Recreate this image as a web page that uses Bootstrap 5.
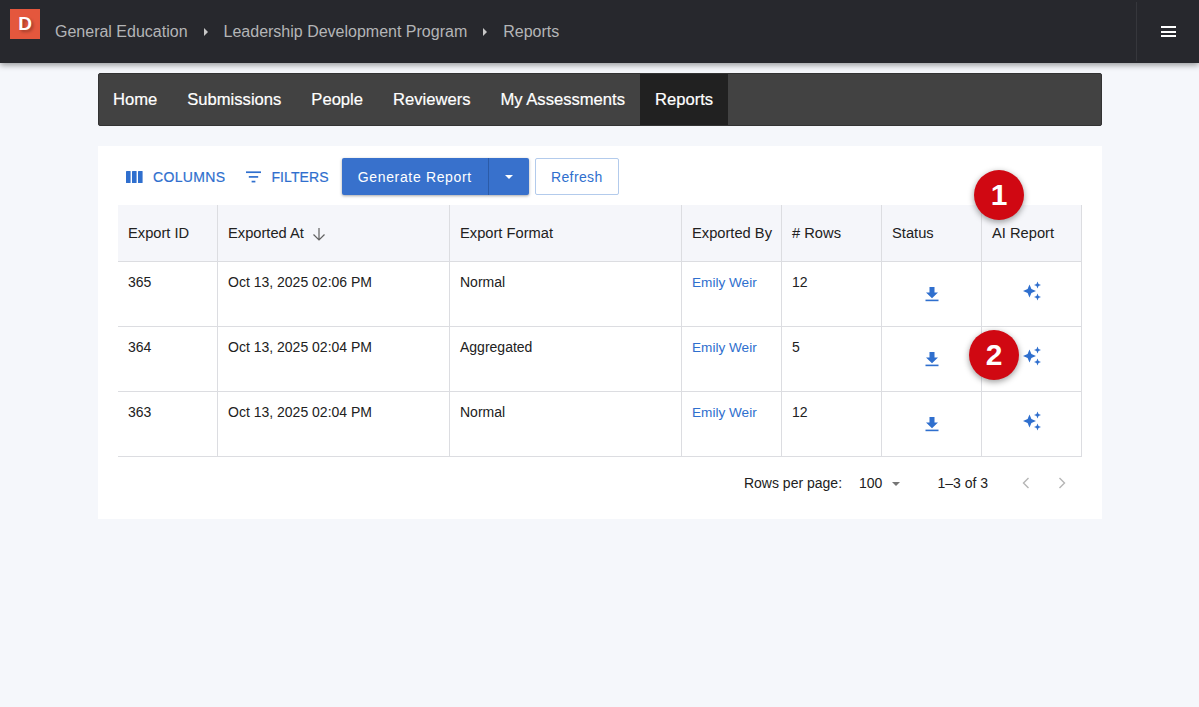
<!DOCTYPE html>
<html lang="en">
<head>
  <meta charset="UTF-8" />
  <title>Reports</title>
  <meta name="viewport" content="width=device-width, initial-scale=1" />
  <link href="https://cdn.jsdelivr.net/npm/bootstrap@5.3.3/dist/css/bootstrap.min.css" rel="stylesheet" />
  <style>
    body {
      margin: 0;
      height: 707px;
      overflow: hidden;
      position: relative;
      font-family: "Liberation Sans", Arial, sans-serif;
      background-color: #f5f7fb;
      color: #212121;
    }

    /* Top bar */
    .top-bar {
      height: 63px;
      background-color: #27282d;
      box-shadow: 0 2px 6px rgba(0, 0, 0, .4);
    }
    .logo-box {
      width: 30px;
      height: 30px;
      margin: 9px 0 0 10px;
      background-color: #e4573d;
      color: #fff;
      font-weight: 700;
      font-size: 19px;
      line-height: 30px;
      text-align: center;
      text-shadow: 2px 2px 3px rgba(0, 0, 0, .3);
    }
    .crumbs {
      margin-left: 15px;
      font-size: 16px;
      color: #b4b5b7;
      gap: 15px;
    }
    .crumb-sep {
      width: 0;
      height: 0;
      margin: 0 1px;
      border-left: 4px solid #c8c8c8;
      border-top: 4px solid transparent;
      border-bottom: 4px solid transparent;
    }
    .menu-btn {
      width: 63px;
      height: 59px;
      margin-top: 2px;
      border-left: 1px solid #36373c;
    }
    .menu-lines {
      width: 15px;
      height: 11px;
      border-top: 2px solid #fff;
      border-bottom: 2px solid #fff;
      position: relative;
    }
    .menu-lines::after {
      content: "";
      position: absolute;
      left: 0;
      right: 0;
      top: 2.5px;
      height: 2px;
      background: #fff;
    }

    /* Section tabs */
    .page-wrap {
      width: 1004px;
      margin: 10px 0 0 98px;
    }
    .tab-bar {
      height: 53px;
      background-color: #424242;
      border: 1px solid #333;
      border-radius: 2px;
    }
    .tab-link {
      display: block;
      padding: 0 15px;
      line-height: 51px;
      font-size: 16.6px;
      color: #fff;
      text-decoration: none;
      -webkit-text-stroke: .2px #fff;
    }
    .tab-link:first-child {
      padding-left: 14px;
    }
    .tab-link.is-active {
      background-color: #212121;
    }

    /* Report panel */
    .report-panel {
      height: 373px;
      margin-top: 20px;
      padding: 12px 20px 0;
      background-color: #fff;
    }
    .tool-bar {
      height: 37px;
      margin-bottom: 10px;
    }
    .tool-link {
      display: inline-flex;
      align-items: center;
      gap: 10px;
      margin: 0 8px;
      padding-top: 1px;
      font-size: 14px;
      letter-spacing: .35px;
      color: #2f6fce;
      -webkit-text-stroke: .2px #2f6fce;
    }
    .tool-link + .tool-link {
      margin-left: 13px;
      margin-right: 13px;
      letter-spacing: .1px;
    }
    .gen-btn {
      height: 37px;
      background-color: #3871cc;
      color: #fff;
      font-size: 14px;
      letter-spacing: .66px;
      border-radius: 2px;
      box-shadow: 0 1px 3px rgba(0, 0, 0, .35);
    }
    .gen-main {
      padding: 0 16px;
      line-height: 38px;
      border-right: 1px solid #2b5ba8;
    }
    .gen-caret {
      width: 40px;
    }
    .gen-caret::before {
      content: "";
      border-top: 4px solid #fff;
      border-left: 4px solid transparent;
      border-right: 4px solid transparent;
    }
    .refresh-btn {
      height: 37px;
      margin-left: 6px;
      padding: 0 15px;
      line-height: 36px;
      font-size: 14px;
      letter-spacing: .4px;
      color: #2f6fce;
      background: #fff;
      border: 1px solid #b3cbec;
      border-radius: 2px;
    }

    .report-grid {
      width: 964px;
      table-layout: fixed;
      border-collapse: collapse;
      font-size: 14px;
      margin: 0;
    }
    .col-id { width: 99.5px; }
    .col-wide { width: 232px; }
    .col-std { width: 100px; }
    .report-grid th,
    .report-grid td {
      padding: 0 10px;
      border: 1px solid #dcdde1;
      color: #212121;
      box-shadow: none;
    }
    .report-grid tr > :first-child { border-left: 0; }
    .report-grid th {
      height: 56px;
      font-size: 14.7px;
      font-weight: 400;
      white-space: nowrap;
      vertical-align: middle;
      background-color: #f5f6fa;
      border-top: 0;
    }
    .report-grid td {
      height: 65px;
      padding-top: 10px;
      vertical-align: top;
    }
    .report-grid td.icon-cell {
      padding: 0 0 1px;
      text-align: center;
      vertical-align: middle;
    }
    .report-grid td.spark-cell {
      padding: 0 0 7px 1px;
    }
    .user-link {
      font-size: 13.6px;
      color: #2f6fce;
      text-decoration: none;
    }

    .pager {
      height: 52px;
      font-size: 14px;
      color: #212121;
    }
    .pager-text { padding-top: 2px; }
    .pager-per { margin-left: 17px; }
    .pager-caret {
      display: inline-block;
      margin: 0 0 2px 10px;
      border-top: 4px solid #757575;
      border-left: 4px solid transparent;
      border-right: 4px solid transparent;
    }
    .pager-count { margin: 0 34px 0 37px; }
    .pager-arrow { margin-right: 16px; }
    .pager-arrow + .pager-arrow { margin-left: 12px; }

    /* Callout numbers */
    .callout {
      position: absolute;
      width: 50px;
      height: 50px;
      border-radius: 50%;
      background-color: #d00812;
      color: #fff;
      font-size: 30px;
      font-weight: 700;
      line-height: 50px;
      text-align: center;
      box-shadow: 0 2px 6px rgba(0, 0, 0, .4);
    }
    .callout-one { left: 974px; top: 170px; }
    .callout-two { left: 969px; top: 330px; }
  </style>
</head>
<body>

  <!-- Top bar -->
  <div class="top-bar d-flex">
    <div class="logo-box">D</div>
    <div class="crumbs d-flex align-items-center flex-grow-1">
      <span>General Education</span>
      <span class="crumb-sep"></span>
      <span>Leadership Development Program</span>
      <span class="crumb-sep"></span>
      <span>Reports</span>
    </div>
    <div class="menu-btn d-flex align-items-center justify-content-center">
      <div class="menu-lines"></div>
    </div>
  </div>

  <div class="page-wrap">
    <!-- Tabs -->
    <div class="tab-bar d-flex">
      <a class="tab-link" href="#">Home</a>
      <a class="tab-link" href="#">Submissions</a>
      <a class="tab-link" href="#">People</a>
      <a class="tab-link" href="#">Reviewers</a>
      <a class="tab-link" href="#">My Assessments</a>
      <a class="tab-link is-active" href="#">Reports</a>
    </div>

    <!-- Panel -->
    <div class="report-panel">
      <div class="tool-bar d-flex align-items-center">
        <span class="tool-link">
          <svg width="17" height="12" viewBox="0 0 17 12" fill="#2f6fce"><rect width="4.6" height="12" rx=".6"/><rect x="6" width="4.6" height="12" rx=".6"/><rect x="12" width="4.6" height="12" rx=".6"/></svg>
          COLUMNS
        </span>
        <span class="tool-link">
          <svg width="15" height="12" viewBox="0 0 16 12" fill="#2f6fce"><rect width="16" height="1.8"/><rect x="3" y="5" width="10" height="1.8"/><rect x="6" y="10" width="4" height="1.8"/></svg>
          FILTERS
        </span>
        <div class="gen-btn d-flex">
          <span class="gen-main">Generate Report</span>
          <span class="gen-caret d-flex align-items-center justify-content-center"></span>
        </div>
        <span class="refresh-btn">Refresh</span>
      </div>

      <table class="report-grid">
        <colgroup>
          <col class="col-id" /><col class="col-wide" /><col class="col-wide" />
          <col class="col-std" /><col class="col-std" /><col class="col-std" /><col class="col-std" />
        </colgroup>
        <thead>
          <tr>
            <th>Export ID</th>
            <th>Exported At
              <svg class="ms-1" width="14" height="14" viewBox="0 0 14 14" fill="none" stroke="#616161" stroke-width="1.2"><path d="M7 1v12M1.500 7.500 7 13l5.500-5.500"/></svg>
            </th>
            <th>Export Format</th>
            <th>Exported By</th>
            <th># Rows</th>
            <th>Status</th>
            <th>AI Report</th>
          </tr>
        </thead>
        <tbody id="rows"></tbody>
      </table>

      <div class="pager d-flex align-items-center justify-content-end">
        <span class="pager-text">Rows per page:</span>
        <span class="pager-text pager-per">100<span class="pager-caret"></span></span>
        <span class="pager-text pager-count">1–3 of 3</span>
        <svg class="pager-arrow" width="8" height="12" viewBox="0 0 8 12" fill="none" stroke="#b5b5b5" stroke-width="1.4"><path d="M6.500 1 1.500 6l5 5"/></svg>
        <svg class="pager-arrow" width="8" height="12" viewBox="0 0 8 12" fill="none" stroke="#b5b5b5" stroke-width="1.4"><path d="M1.500 1l5 5-5 5"/></svg>
      </div>
    </div>
  </div>

  <div class="callout callout-one">1</div>
  <div class="callout callout-two">2</div>

  <script>
    const data = [
      { id: 365, at: 'Oct 13, 2025 02:06 PM', format: 'Normal', rows: 12 },
      { id: 364, at: 'Oct 13, 2025 02:04 PM', format: 'Aggregated', rows: 5 },
      { id: 363, at: 'Oct 13, 2025 02:04 PM', format: 'Normal', rows: 12 }
    ];

    const downloadIcon = '<svg width="14" height="16" viewBox="0 0 14 16" fill="#2f6fce"><path d="M4.500 1h5v5.500H13L7 12.200 1 6.500h3.500z"/><rect x=".5" y="13.600" width="13" height="1.600"/></svg>';
    const sparkIcon = '<svg width="20" height="20" viewBox="0 0 20 20" fill="#2f6fce"><path d="M7.500 3.500 9.400 8.100 14 10l-4.600 1.900L7.500 16.500 5.600 11.900 1 10l4.600-1.900z"/><path d="M15.500 .5l1 2.500 2.500 1-2.500 1-1 2.500-1-2.500-2.500-1 2.500-1z"/><path d="M15.500 12.500l1 2.500 2.500 1-2.500 1-1 2.500-1-2.500-2.500-1 2.500-1z"/></svg>';

    document.getElementById('rows').innerHTML = data.map(r => `
      <tr>
        <td>${r.id}</td>
        <td>${r.at}</td>
        <td>${r.format}</td>
        <td><a class="user-link" href="#">Emily Weir</a></td>
        <td>${r.rows}</td>
        <td class="icon-cell">${downloadIcon}</td>
        <td class="icon-cell spark-cell">${sparkIcon}</td>
      </tr>`).join('');
  </script>
</body>
</html>
